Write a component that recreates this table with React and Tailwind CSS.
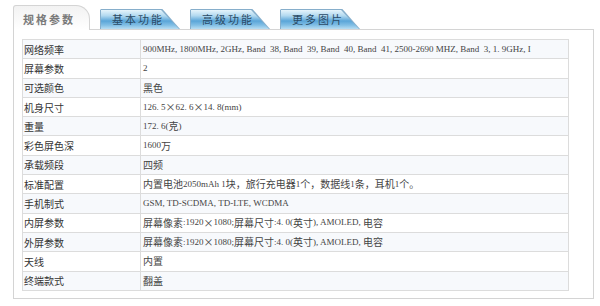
import React from 'react';

const rows = [
  ['网络频率', '900MHz, 1800MHz, 2GHz, Band  38, Band  39, Band  40, Band  41, 2500-2690 MHZ, Band  3, 1. 9GHz, I'],
  ['屏幕参数', '2'],
  ['可选颜色', '黑色'],
  ['机身尺寸', '126. 5×62. 6×14. 8(mm)'],
  ['重量', '172. 6(克)'],
  ['彩色屏色深', '1600万'],
  ['承载频段', '四频'],
  ['标准配置', '内置电池2050mAh 1块，旅行充电器1个，数据线1条，耳机1个。'],
  ['手机制式', 'GSM, TD-SCDMA, TD-LTE, WCDMA'],
  ['内屏参数', '屏幕像素:1920×1080;屏幕尺寸:4. 0(英寸), AMOLED, 电容'],
  ['外屏参数', '屏幕像素:1920×1080;屏幕尺寸:4. 0(英寸), AMOLED, 电容'],
  ['天线', '内置'],
  ['终端款式', '翻盖'],
];

const tabs = ['基本功能', '高级功能', '更多图片'];

// CJK runs at 10px, latin runs smaller in a serif, like the old SimSun pages
const Value = ({ text }) =>
  text.split(/([\u3000-\u9fff\uff00-\uffef×]+)/).map((part, i) =>
    /[\u3000-\u9fff\uff00-\uffef×]/.test(part) ? (
      <span key={i} className="text-[10px] [font-family:'Noto_Sans_CJK_SC',sans-serif]">{part}</span>
    ) : (
      <span key={i} className="text-[9px] [font-family:'Liberation_Serif',serif]">{part}</span>
    )
  );

// blue glossy tab with the slanted right corner
const BlueTab = ({ label }) => (
  <div className="w-[80px] h-[20px] bg-[#86aecb] [clip-path:polygon(0_1px,1px_0,78%_0,100%_100%,0_100%)]">
    <div className="mt-[1px] ml-[1px] w-[78px] h-[19px] bg-[linear-gradient(180deg,#e6f4fb_0%,#b2d9f0_30%,#5aa5d8_58%,#82bfe5_80%,#b8ddf2_100%)] [clip-path:polygon(0_0,77%_0,100%_100%,0_100%)] flex items-center pl-[11px]">
      <span className="text-[11px] leading-none tracking-[2px] text-[#2b4b66] [font-family:'Noto_Sans_CJK_SC',sans-serif]">
        {label}
      </span>
    </div>
  </div>
);

const App = () => {
  return (
    <div className="w-[600px] h-[306px] bg-white pt-[5px] pl-[13px]">
      <div className="w-[581px]">
        <div className="flex items-end h-[25px]">
          <div className="w-[77px] h-[25px] border-l border-t border-r border-[#d4d4d4] rounded-tl-[3px] rounded-tr-[14px] bg-[linear-gradient(180deg,#f2f2f2,#ffffff)] flex items-center pl-[9px] pt-[2px]">
            <span className="text-[11px] font-bold leading-none tracking-[2px] text-[#7a7a7a] [font-family:'Noto_Sans_CJK_SC',sans-serif]">
              规格参数
            </span>
          </div>
          <div className="flex-1 h-[20px] border-b border-[#d4d4d4] flex items-end gap-[10px] pl-[10px]">
            {tabs.map((t) => (
              <BlueTab key={t} label={t} />
            ))}
          </div>
        </div>

        <div className="border-l border-r border-b border-[#d4d4d4] pl-[8px] pr-[24px] pt-[9px] pb-[7px]">
          <div className="border-t border-l border-r border-[#dcdcdc]">
            {rows.map(([k, v], i) => (
              <div
                key={k}
                className={`flex h-[19.3px] border-b border-[#dcdcdc] ${i % 2 === 0 ? 'bg-[#f7f9fc]' : 'bg-white'}`}
              >
                <div className="w-[118px] border-r border-[#dcdcdc] pl-[1px] flex items-center text-[10px] text-[#333] [font-family:'Noto_Sans_CJK_SC',sans-serif]">
                  {k}
                </div>
                <div className="flex-1 pl-[2px] flex items-center leading-none text-[#444] whitespace-pre">
                  <Value text={v} />
                </div>
              </div>
            ))}
          </div>
        </div>
      </div>
    </div>
  );
};

export default App;
